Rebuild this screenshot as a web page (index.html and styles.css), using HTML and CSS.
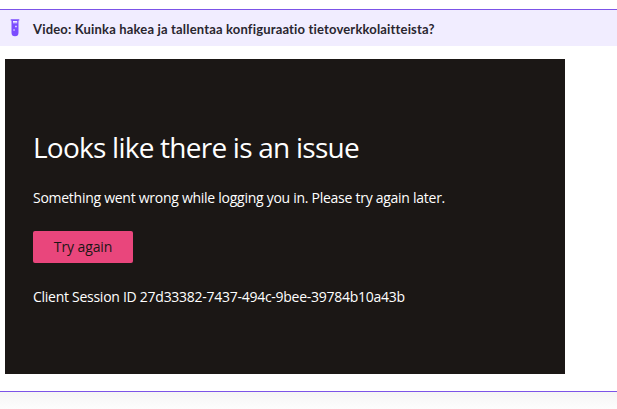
FILE: index.html
```html
<!DOCTYPE html>
<html lang="fi">
<head>
<meta charset="utf-8">
<title>Video</title>
<link rel="stylesheet" href="styles.css">
</head>
<body>
<section class="card">
  <header class="card-header">
    <svg class="tube" width="10" height="18" viewBox="0 0 10 18" aria-hidden="true">
      <path fill="#7c4dff" d="M.7.2h8.600v1.300h-.8v12.200a3.500 3.500 0 0 1-7 0V1.500H.7z"/>
      <path fill="#f1edff" d="M3 2h4.200v1.700H3zM5.200 6.800h1.500v1.500H5.200zM3.200 10.500h1.700v1.100H3.200z"/>
      <path fill="#b79fff" d="M3 3.700h4.200v.8H3z"/>
    </svg>
    <h2 class="card-title">Video: Kuinka hakea ja tallentaa konfiguraatio tietoverkkolaitteista?</h2>
  </header>
  <main class="player" lang="en">
    <h1 class="heading">Looks like there is an issue</h1>
    <p class="message">Something went wrong while logging you in. Please try again later.</p>
    <button class="retry" type="button">Try again</button>
    <p class="session">Client Session ID 27d33382-7437-494c-9bee-39784b10a43b</p>
  </main>
</section>
<div class="shade"></div>
</body>
</html>
```

FILE: styles.css
```css
* { box-sizing: border-box; }
body {
  margin: 0;
  padding-top: 9px;
  height: 409px;
  overflow: hidden;
  background: #fff;
  font-family: "Open Sans", "Noto Sans", sans-serif;
}
.card {
  height: 383px;
  border-top: 1px solid #7c54e8;
  border-bottom: 1px solid #7c54e8;
}
.card-header {
  display: flex;
  height: 36px;
  padding-left: 10px;
  gap: 13px;
  background: #f1edff;
}
.tube { flex: none; margin-top: 9px; }
.card-title {
  margin: 0;
  padding-top: 1px;
  font: 700 13px/36px Lato, sans-serif;
  letter-spacing: 0.17px;
  color: #29262f;
  white-space: nowrap;
}
.player {
  width: 560px;
  height: 315px;
  margin: 13px 0 0 5px;
  padding: 68px 28px 0;
  background: #1b1715;
  color: #fff;
  white-space: nowrap;
}
.heading {
  margin: 0;
  font-size: 28px;
  font-weight: 400;
  line-height: 40px;
  letter-spacing: -0.76px;
}
.message, .session {
  margin: 0;
  font-size: 14px;
  line-height: 20px;
  letter-spacing: -0.27px;
}
.message { margin-top: 21px; }
.retry {
  display: block;
  width: 100px;
  height: 32px;
  margin: 23px 0 24px;
  padding: 0;
  border: 0;
  border-radius: 2px;
  background: #e9467c;
  color: #1b1715;
  font: 500 14px/32px "Open Sans", sans-serif;
  letter-spacing: -0.1px;
}
.shade {
  height: 17px;
  background: linear-gradient(#f5f5f5, #fdfdfd);
}
```
